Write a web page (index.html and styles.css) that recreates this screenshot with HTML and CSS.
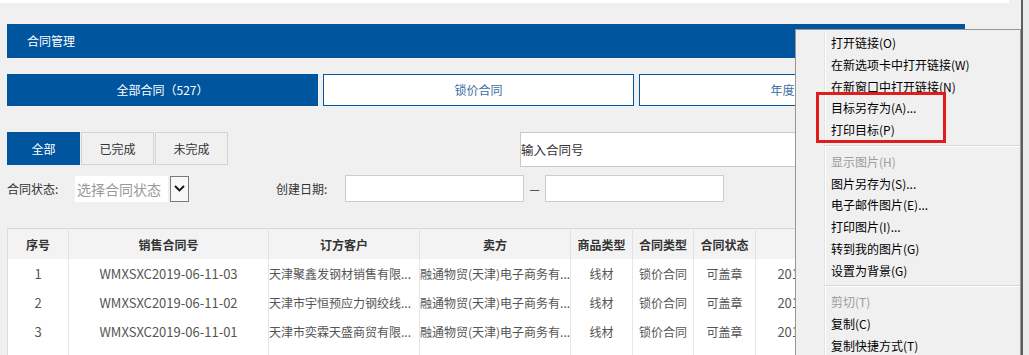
FILE: index.html
```html
<!DOCTYPE html>
<html>
<head>
  <meta charset="UTF-8">
  <title>合同管理</title>
  <link rel="stylesheet" href="styles.css">
</head>
<body>
  <div class="screen">
    <div class="page">
      <div class="top-strip"></div>
      <div class="content">
        <div class="title-bar">合同管理</div>

        <div class="tabs">
          <div class="tab active">全部合同（527）</div>
          <div class="tab">锁价合同</div>
          <div class="tab">年度合同</div>
        </div>

        <div class="toolbar">
          <div class="status-seg">
            <div class="seg-btn active">全部</div>
            <div class="seg-btn">已完成</div>
            <div class="seg-btn">未完成</div>
          </div>
          <div class="search">输入合同号</div>
        </div>

        <div class="filters">
          <span class="label status-label">合同状态:</span>
          <div class="select">
            <span class="select-text">选择合同状态</span>
            <span class="select-btn">
              <svg width="11" height="7" viewBox="0 0 11 7"><path d="M1 1 L5.5 5.5 L10 1" fill="none" stroke="#111" stroke-width="1.8"/></svg>
            </span>
          </div>
          <span class="label date-label">创建日期:</span>
          <div class="date-input"></div>
          <span class="dash">—</span>
          <div class="date-input"></div>
        </div>

        <table class="grid">
          <colgroup>
            <col style="width:61px">
            <col style="width:200px">
            <col style="width:151px">
            <col style="width:151px">
            <col style="width:62px">
            <col style="width:61px">
            <col style="width:62px">
            <col style="width:164px">
            <col>
          </colgroup>
          <thead>
            <tr>
              <th>序号</th>
              <th>销售合同号</th>
              <th>订方客户</th>
              <th>卖方</th>
              <th>商品类型</th>
              <th>合同类型</th>
              <th>合同状态</th>
              <th>创建时间</th>
              <th>操作</th>
            </tr>
          </thead>
          <tbody>
            <tr>
              <td class="num">1</td>
              <td class="num">WMXSXC2019-06-11-03</td>
              <td class="left">天津聚鑫发钢材销售有限...</td>
              <td class="left">融通物贸(天津)电子商务有...</td>
              <td>线材</td>
              <td>锁价合同</td>
              <td>可盖章</td>
              <td class="num">2019-06-11 15:02:33</td>
              <td>查看</td>
            </tr>
            <tr>
              <td class="num">2</td>
              <td class="num">WMXSXC2019-06-11-02</td>
              <td class="left">天津市宇恒预应力钢绞线...</td>
              <td class="left">融通物贸(天津)电子商务有...</td>
              <td>线材</td>
              <td>锁价合同</td>
              <td>可盖章</td>
              <td class="num">2019-06-11 14:47:10</td>
              <td>查看</td>
            </tr>
            <tr>
              <td class="num">3</td>
              <td class="num">WMXSXC2019-06-11-01</td>
              <td class="left">天津市奕霖天盛商贸有限...</td>
              <td class="left">融通物贸(天津)电子商务有...</td>
              <td>线材</td>
              <td>锁价合同</td>
              <td>可盖章</td>
              <td class="num">2019-06-11 14:30:52</td>
              <td>查看</td>
            </tr>
            <tr>
              <td></td><td></td><td></td><td></td><td></td><td></td><td></td><td></td><td></td>
            </tr>
          </tbody>
        </table>
      </div>

      <!-- 右键菜单 -->
      <div class="ctx-menu">
        <div class="menu-item">打开链接(O)</div>
        <div class="menu-item">在新选项卡中打开链接(W)</div>
        <div class="menu-item">在新窗口中打开链接(N)</div>
        <div class="menu-item">目标另存为(A)...</div>
        <div class="menu-item">打印目标(P)</div>
        <div class="menu-sep"></div>
        <div class="menu-item disabled">显示图片(H)</div>
        <div class="menu-item">图片另存为(S)...</div>
        <div class="menu-item">电子邮件图片(E)...</div>
        <div class="menu-item">打印图片(I)...</div>
        <div class="menu-item">转到我的图片(G)</div>
        <div class="menu-item">设置为背景(G)</div>
        <div class="menu-sep"></div>
        <div class="menu-item disabled">剪切(T)</div>
        <div class="menu-item">复制(C)</div>
        <div class="menu-item">复制快捷方式(T)</div>
      </div>

      <!-- 红色标注框 -->
      <div class="highlight"></div>
    </div>
    <div class="edge"></div>
  </div>
</body>
</html>
```

FILE: styles.css
```css
body {
  margin: 0;
  font-family: "Noto Sans CJK SC", "Microsoft YaHei", sans-serif;
  font-size: 12px;
  color: #333;
  background: #f0f0f0;
  overflow: hidden;
}

.screen {
  display: flex;
  width: 1029px;
  height: 355px;
  overflow: hidden;
}

.page {
  position: relative;
  width: 1021px;
  flex: none;
}

/* 右侧窗口边 */
.edge {
  flex: 1;
  border-left: 2px solid #5e5e5e;
  background: #ebebeb;
}

.top-strip {
  height: 3px;
  width: 1009px;
  background: #fff;
}

.content {
  width: 958px;
  padding: 21px 0 0 7px;
}

/* 顶部标题栏 */
.title-bar {
  height: 34px;
  line-height: 34px;
  padding-left: 20px;
  background: #00559f;
  color: #fff;
  font-size: 12px;
}

/* 合同分类标签 */
.tabs {
  display: flex;
  gap: 5px;
  margin-top: 16px;
}

.tab {
  width: 311px;
  height: 32px;
  line-height: 30px;
  box-sizing: border-box;
  border: 1px solid #00559f;
  background: #fff;
  color: #3d6ea5;
  text-align: center;
}

.tab.active {
  background: #00559f;
  color: #fff;
}

/* 状态按钮和搜索 */
.toolbar {
  display: flex;
  align-items: flex-start;
  height: 35px;
  margin-top: 26px;
}

.status-seg {
  display: flex;
  gap: 1px;
}

.seg-btn {
  width: 73px;
  height: 33px;
  line-height: 31px;
  box-sizing: border-box;
  border: 1px solid #d3d3d3;
  background: #f0f0f0;
  color: #333;
  text-align: center;
}

.seg-btn.active {
  background: #00559f;
  border-color: #00559f;
  color: #fff;
}

.search {
  width: 438px;
  height: 35px;
  line-height: 33px;
  margin-left: 292px;
  box-sizing: border-box;
  border: 1px solid #c9c9c9;
  background: #fff;
  font-size: 12.5px;
  color: #333;
}

/* 筛选条件 */
.filters {
  display: flex;
  align-items: center;
  height: 27px;
  margin-top: 8px;
}

.label {
  font-size: 12px;
  color: #333;
}

.status-label {
  width: 68px;
}

.date-label {
  width: 69px;
  margin-left: 87px;
}

.select {
  display: flex;
  height: 26px;
}

.select-text {
  width: 91px;
  padding-left: 2px;
  line-height: 26px;
  background: #fff;
  color: #999;
  font-size: 14px;
}

.select-btn {
  display: flex;
  align-items: center;
  justify-content: center;
  width: 19px;
  height: 26px;
  margin-left: 2px;
  box-sizing: border-box;
  border: 1px solid #7a7a7a;
  background: #f7f7f7;
}

.date-input {
  width: 179px;
  height: 27px;
  box-sizing: border-box;
  border: 1px solid #cdcdcd;
  background: #fff;
}

.dash {
  width: 21px;
  text-align: center;
  color: #333;
}

/* 合同列表 */
.grid {
  width: 958px;
  margin-top: 26px;
  border-collapse: collapse;
  table-layout: fixed;
  border-top: 1px solid #d6d6d6;
  border-left: 1px solid #dcdcdc;
}

.grid th {
  height: 30px;
  padding: 0;
  background: #f3f3f3;
  border-right: 1px solid #e3e3e3;
  font-size: 12px;
  font-weight: bold;
  color: #333;
}

.grid td {
  height: 29px;
  padding: 0;
  background: #fff;
  border-right: 1px solid #e6e6e6;
  font-size: 12px;
  color: #555;
  text-align: center;
  white-space: nowrap;
  overflow: hidden;
}

.grid td.num {
  font-size: 13px;
}

.grid td.left {
  text-align: left;
}

/* 右键菜单 */
.ctx-menu {
  position: absolute;
  left: 795px;
  top: 29px;
  width: 226px;
  height: 340px;
  box-sizing: border-box;
  padding-top: 2px;
  border: 1px solid #979797;
  background: #f0f0f0;
  font-size: 12px;
  color: #000;
}

.ctx-menu::before {
  content: "";
  position: absolute;
  left: 28px;
  top: 0;
  bottom: 0;
  width: 1px;
  background: #e2e3e3;
  box-shadow: 1px 0 0 #fff;
}

.menu-item {
  position: relative;
  height: 21.75px;
  line-height: 21.75px;
  padding-left: 35px;
  white-space: nowrap;
}

.menu-item.disabled {
  color: #9d9d9d;
}

.menu-sep {
  position: relative;
  margin: 4px 0 4px 29px;
  border-top: 1px solid #d7d7d7;
  border-bottom: 1px solid #fff;
}

.highlight {
  position: absolute;
  left: 816px;
  top: 92px;
  width: 130px;
  height: 51px;
  box-sizing: border-box;
  border: 3px solid #e21b1b;
}
```
